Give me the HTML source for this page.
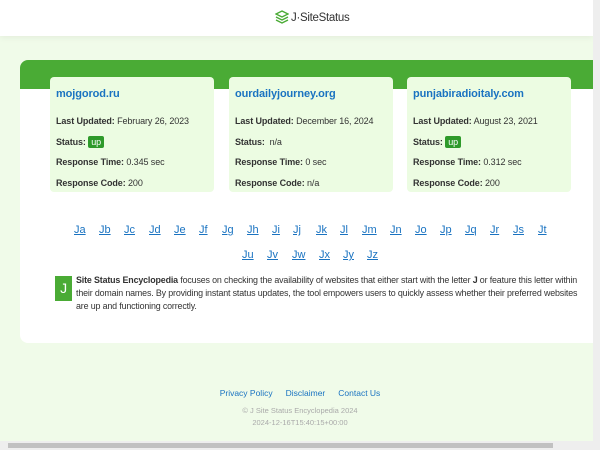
<!DOCTYPE html>
<html><head><style>
*{margin:0;padding:0;box-sizing:border-box}
body{width:600px;height:450px;overflow:hidden;background:#f0fbe9;font-family:"Liberation Sans",sans-serif;position:relative}
.hdr{position:absolute;left:0;top:0;width:593px;height:36px;background:#fff;box-shadow:0 2px 6px rgba(0,0,0,.05)}
.logo{position:absolute;left:275px;top:10px;font-size:11.5px;color:#333;display:flex;align-items:center;gap:2px;letter-spacing:-0.3px}
.panel{position:absolute;left:20px;top:60px;width:573px;height:283px;background:#fff;border-radius:8px 0 0 8px;overflow:hidden}
.band{height:29px;background:#4aab35}
.card{position:absolute;top:17px;width:164px;height:115px;background:#ecfce2;border-radius:4px;padding:11px 6px;font-size:9px;color:#333;letter-spacing:-0.1px}
.card h3{font-size:11px;color:#1a73c1;font-weight:bold;margin-bottom:16px}
.card p{margin-bottom:11.5px;height:9px}
.card b{color:#333}
.up{background:#2e9a2a;color:#fff;padding:1px 3px;border-radius:2px}
.lt{position:absolute;font-size:11px;color:#1a73c1;text-decoration:underline}
.txt{position:absolute;left:35px;top:214px;width:528px;font-size:8.9px;line-height:13px;color:#333;letter-spacing:-0.15px}
.jb{float:left;width:17px;height:25px;background:#4aab35;color:#fff;font-size:14px;text-align:center;line-height:25px;margin:2px 4px 0 0}
.ft{position:absolute;width:600px;text-align:center;font-size:8.5px}
.vs{position:absolute;left:593px;top:0;width:7px;height:450px;background:#eee}
.hs{position:absolute;left:0;top:441px;width:593px;height:9px;background:#eee}
</style></head><body>
<div class="hdr"><div class="logo"><svg width="14" height="16" viewBox="0 0 14 16"><path d="M7 1L13 4L7 7L1 4Z" fill="none" stroke="#4aab35" stroke-width="1.4"/><path d="M1 7L7 10L13 7M1 10L7 13L13 10" fill="none" stroke="#4aab35" stroke-width="1.4"/></svg><span>J·SiteStatus</span></div></div>
<div class="panel"><div class="band"></div>
<div class="card" style="left:30px"><h3>mojgorod.ru</h3><p><b>Last Updated:</b> February 26, 2023</p><p><b>Status:</b> <span class="up">up</span></p><p><b>Response Time:</b> 0.345 sec</p><p><b>Response Code:</b> 200</p></div>
<div class="card" style="left:209px"><h3>ourdailyjourney.org</h3><p><b>Last Updated:</b> December 16, 2024</p><p><b>Status:</b> &nbsp;n/a</p><p><b>Response Time:</b> 0 sec</p><p><b>Response Code:</b> n/a</p></div>
<div class="card" style="left:387px"><h3>punjabiradioitaly.com</h3><p><b>Last Updated:</b> August 23, 2021</p><p><b>Status:</b> <span class="up">up</span></p><p><b>Response Time:</b> 0.312 sec</p><p><b>Response Code:</b> 200</p></div>
<span class="lt" style="left:54px;top:164px">Ja</span><span class="lt" style="left:79px;top:164px">Jb</span><span class="lt" style="left:104px;top:164px">Jc</span><span class="lt" style="left:129px;top:164px">Jd</span><span class="lt" style="left:154px;top:164px">Je</span><span class="lt" style="left:179px;top:164px">Jf</span><span class="lt" style="left:202px;top:164px">Jg</span><span class="lt" style="left:227px;top:164px">Jh</span><span class="lt" style="left:252px;top:164px">Ji</span><span class="lt" style="left:273px;top:164px">Jj</span><span class="lt" style="left:296px;top:164px">Jk</span><span class="lt" style="left:320px;top:164px">Jl</span><span class="lt" style="left:342px;top:164px">Jm</span><span class="lt" style="left:370px;top:164px">Jn</span><span class="lt" style="left:395px;top:164px">Jo</span><span class="lt" style="left:420px;top:164px">Jp</span><span class="lt" style="left:445px;top:164px">Jq</span><span class="lt" style="left:470px;top:164px">Jr</span><span class="lt" style="left:493px;top:164px">Js</span><span class="lt" style="left:518px;top:164px">Jt</span>
<span class="lt" style="left:222px;top:189px">Ju</span><span class="lt" style="left:247px;top:189px">Jv</span><span class="lt" style="left:272px;top:189px">Jw</span><span class="lt" style="left:299px;top:189px">Jx</span><span class="lt" style="left:323px;top:189px">Jy</span><span class="lt" style="left:347px;top:189px">Jz</span>
<div class="txt"><div class="jb">J</div><b>Site Status Encyclopedia</b> focuses on checking the availability of websites that either start with the letter <b>J</b> or feature this letter within their domain names. By providing instant status updates, the tool empowers users to quickly assess whether their preferred websites are up and functioning correctly.</div>
</div>
<div class="ft" style="top:388px;color:#1a73c1"><span style="margin-right:13px">Privacy Policy</span><span style="margin-right:13px">Disclaimer</span><span>Contact Us</span></div>
<div class="ft" style="top:406px;color:#aaa;font-size:7.5px">© J Site Status Encyclopedia 2024</div>
<div class="ft" style="top:418px;color:#aaa;font-size:7.5px">2024-12-16T15:40:15+00:00</div>
<div class="vs"></div><div class="hs"><div style="position:absolute;left:8px;top:2px;width:545px;height:5px;background:#c1c1c1"></div></div>
</body></html>
